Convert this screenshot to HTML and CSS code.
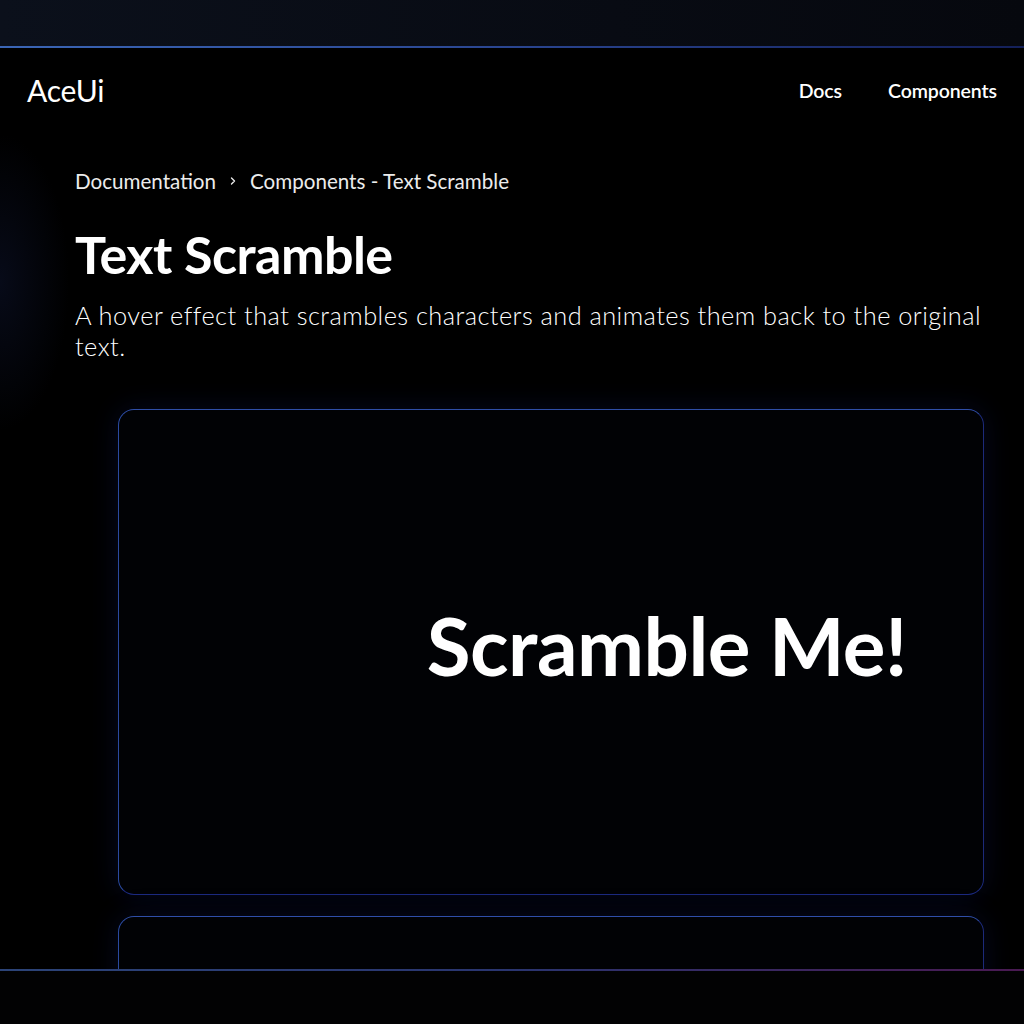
FILE: index.html
```html
<!DOCTYPE html>
<html lang="en">
<head>
<meta charset="utf-8">
<title>Text Scramble - AceUi</title>
<link rel="stylesheet" href="styles.css">
</head>
<body>
<div class="topband"></div>
<header class="nav">
  <div class="logo">AceUi</div>
  <nav class="links">
    <a class="link">Docs</a>
    <a class="link">Components</a>
  </nav>
</header>
<main class="page">
  <div class="glow-left"></div>
  <div class="crumbs">
    <span>Documentation</span>
    <svg class="chev" width="10" height="10" viewBox="0 0 10 10"><path d="M3.5 2 L6.5 5 L3.5 8" fill="none" stroke="#e8e8e8" stroke-width="1.4" stroke-linecap="round" stroke-linejoin="round"/></svg>
    <span>Components - Text Scramble</span>
  </div>
  <h1 class="title">Text Scramble</h1>
  <p class="desc">A hover effect that scrambles characters and animates them back to the original text.</p>
  <section class="card preview">
    <span class="scramble">Scramble Me!</span>
  </section>
  <section class="card second"></section>
</main>
<footer class="bottombar"></footer>
</body>
</html>
```
FILE: styles.css
```css
html, body {
  margin: 0;
  padding: 0;
  background: #000;
  color: #fff;
  font-family: Lato, "Noto Sans", sans-serif;
  height: 1024px;
  overflow: hidden;
}
.topband {
  height: 46px;
  background: linear-gradient(90deg, #0b101b 0%, #080b13 60%, #06080e 100%);
  border-bottom: 2px solid transparent;
  border-image: linear-gradient(90deg, #3b66b6 0%, #2a4590 50%, #14205a 100%) 1;
}
.nav {
  height: 84px;
  display: flex;
  align-items: center;
  justify-content: space-between;
  padding: 0 27px;
}
.logo {
  font-size: 30px;
  font-weight: 400;
  letter-spacing: -0.2px;
}
.links {
  display: flex;
  gap: 46px;
}
.link {
  font-size: 19.5px;
  font-weight: 600;
  letter-spacing: -0.1px;
  color: #fff;
}
.page {
  position: relative;
  padding: 37px 40px 0 75px;
}
.glow-left {
  position: absolute;
  left: 0;
  top: 0;
  width: 70px;
  height: 300px;
  background: radial-gradient(ellipse at left center, rgba(20, 30, 70, 0.35), rgba(0, 0, 0, 0) 70%);
  pointer-events: none;
}
.crumbs {
  display: flex;
  align-items: center;
  gap: 12px;
  font-size: 20.6px;
  color: #ececec;
  height: 24px;
}
.title {
  margin: 31px 0 0;
  font-size: 52px;
  font-weight: 700;
  line-height: 60px;
  letter-spacing: -0.5px;
}
.desc {
  margin: 16px 0 0;
  font-size: 25.4px;
  line-height: 31px;
  font-weight: 300;
  letter-spacing: 0.45px;
  color: #fff;
  max-width: 920px;
}
.card {
  margin-left: 43px;
  width: 866px;
  border: 1px solid #2a45a0;
  border-radius: 16px;
  background: #010205;
  box-shadow: 0 0 28px rgba(25, 40, 140, 0.22);
  box-sizing: border-box;
  border-color: #2f4ea8 #1c2a7a #1c2a80 #2a4aa0;
}
.preview {
  margin-top: 47px;
  height: 486px;
  display: flex;
  align-items: center;
  justify-content: flex-end;
  padding-right: 76px;
  padding-bottom: 14px;
}
.scramble {
  font-size: 80px;
  font-weight: 700;
  letter-spacing: -0.5px;
}
.second {
  margin-top: 21px;
  height: 200px;
}
.bottombar {
  position: fixed;
  left: 0;
  right: 0;
  bottom: 0;
  height: 53px;
  background: #020203;
  border-top: 2px solid transparent;
  border-image: linear-gradient(90deg, #2c4478 0%, #2a3570 50%, #4a1a52 100%) 1;
}
```
